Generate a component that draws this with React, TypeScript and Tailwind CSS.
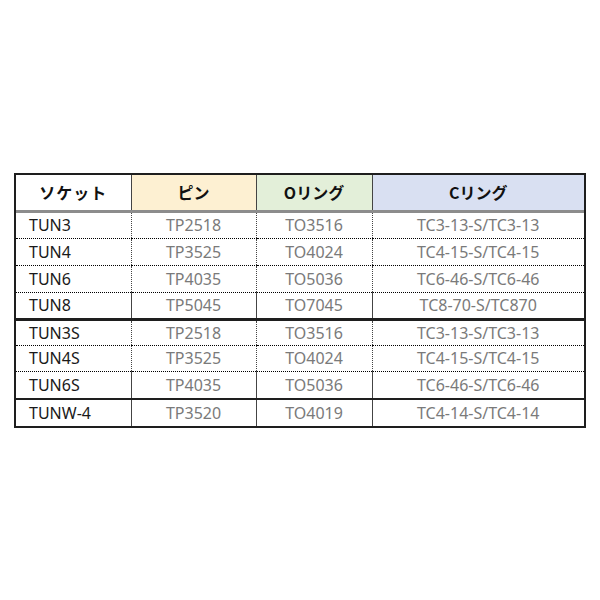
import React from "react";

type Row = { s: string; p: string; o: string; c: string };

const group1: Row[] = [
  { s: "TUN3", p: "TP2518", o: "TO3516", c: "TC3-13-S/TC3-13" },
  { s: "TUN4", p: "TP3525", o: "TO4024", c: "TC4-15-S/TC4-15" },
  { s: "TUN6", p: "TP4035", o: "TO5036", c: "TC6-46-S/TC6-46" },
  { s: "TUN8", p: "TP5045", o: "TO7045", c: "TC8-70-S/TC870" },
];
const group2: Row[] = [
  { s: "TUN3S", p: "TP2518", o: "TO3516", c: "TC3-13-S/TC3-13" },
  { s: "TUN4S", p: "TP3525", o: "TO4024", c: "TC4-15-S/TC4-15" },
  { s: "TUN6S", p: "TP4035", o: "TO5036", c: "TC6-46-S/TC6-46" },
];
const group3: Row[] = [{ s: "TUNW-4", p: "TP3520", o: "TO4019", c: "TC4-14-S/TC4-14" }];

function DataRow({ r, bottom, h }: { r: Row; bottom: string; h: string }) {
  const cell = `border-l border-[#444] text-center text-[#7a7a7a] ${bottom}`;
  return (
    <tr className={h}>
      <td className={`pl-[13px] text-left text-[#1a1a1a] ${bottom}`}>{r.s}</td>
      <td className={cell}>{r.p}</td>
      <td className={cell}>{r.o}</td>
      <td className={cell}>{r.c}</td>
    </tr>
  );
}

export default function App() {
  return (
    <div className="w-[600px] h-[600px] bg-white pt-[173px] pl-[14px]">
      <div className="w-[572px] border-2 border-[#1e1e1e]">
        <table
          className="w-full table-fixed border-collapse text-[16px] leading-none"
          style={{ fontFamily: '"Noto Sans", "Noto Sans CJK JP", sans-serif' }}
        >
          <colgroup>
            <col className="w-[115px]" />
            <col className="w-[125px]" />
            <col className="w-[116px]" />
            <col className="w-[212px]" />
          </colgroup>
          <thead>
            <tr className="h-[36px] font-bold text-[#111]" style={{ fontFamily: '"Noto Sans CJK JP", sans-serif' }}>
              <th className="bg-white border-b-[3px] border-[#8c8c8c] font-bold tracking-[1px]">ソケット</th>
              <th className="bg-[#fdf0d2] border-l border-[#444] border-b-[3px] border-b-[#8c8c8c] font-bold">ピン</th>
              <th className="bg-[#e3efd9] border-l border-[#444] border-b-[3px] border-b-[#8c8c8c] font-bold">Oリング</th>
              <th className="bg-[#d9e0f2] border-l border-[#444] border-b-[3px] border-b-[#8c8c8c] font-bold">Cリング</th>
            </tr>
          </thead>
          <tbody>
            {group1.map((r, i) => (
              <DataRow
                key={r.s}
                r={r}
                h="h-[27px]"
                bottom={i === group1.length - 1 ? "border-b-[3px] border-b-[#1e1e1e]" : "border-b border-dotted border-b-black"}
              />
            ))}
            {group2.map((r, i) => (
              <DataRow
                key={r.s}
                r={r}
                h={i === group2.length - 1 ? "h-[28px]" : "h-[26px]"}
                bottom={i === group2.length - 1 ? "border-b-2 border-b-[#1e1e1e]" : "border-b border-dotted border-b-black"}
              />
            ))}
            {group3.map((r) => (
              <DataRow key={r.s} r={r} h="h-[27px]" bottom="" />
            ))}
          </tbody>
        </table>
      </div>
    </div>
  );
}
